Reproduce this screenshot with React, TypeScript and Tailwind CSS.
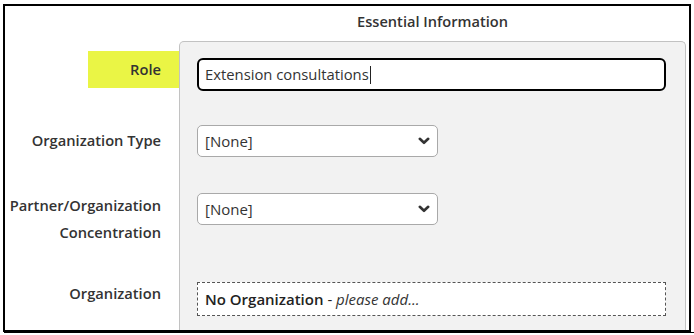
import React from "react";

function Chevron() {
  return (
    <svg width="12" height="8" viewBox="0 0 12 8" className="shrink-0">
      <path d="M1.8 1.8 L6 5.8 L10.2 1.8" fill="none" stroke="#333" strokeWidth="2.6" strokeLinecap="round" strokeLinejoin="round" />
    </svg>
  );
}

function Select() {
  return (
    <div className="flex h-[32px] w-[241px] items-center justify-between rounded-[5px] border border-[#a9a9a9] bg-white pl-[7px] pr-[7px] text-[15px] text-[#333]">
      <span>[None]</span>
      <Chevron />
    </div>
  );
}

export default function App() {
  return (
    <div className="relative h-[335px] w-[694px] bg-white" style={{ fontFamily: '"Open Sans", "Liberation Sans", sans-serif' }}>
      <div className="pt-[4px] pl-[3px]">
        <div className="flex h-[328px] w-[688px] flex-col overflow-hidden border-2 border-black">
          <div className="flex h-[35px] shrink-0">
            <div className="w-[174px] shrink-0" />
            <div className="flex w-[507px] items-center justify-center pb-[3px] text-[14.6px] font-semibold text-[#333]">
              Essential Information
            </div>
          </div>
          <div className="flex flex-1">
            <div className="flex w-[174px] shrink-0 flex-col text-[14.7px] font-semibold text-[#333]">
              <div className="ml-[83px] mt-[10px] flex h-[37px] items-center justify-end bg-[#eaf545] pr-[18px]">Role</div>
              <div className="mt-[39px] pr-[18px] text-right leading-[27px]">Organization Type</div>
              <div className="mt-[38px] pr-[18px] text-right leading-[27px]">
                Partner/Organization
                <br />
                Concentration
              </div>
              <div className="mt-[34px] pr-[18px] text-right leading-[27px]">Organization</div>
            </div>
            <div className="flex w-[507px] flex-col rounded-t-[5px] border border-b-0 border-[#c2c2c2] bg-[#f2f2f2] pl-[17px]">
              <div className="mt-[16px] flex h-[33px] w-[469px] items-center rounded-[6px] border-2 border-black bg-white pl-[6px] text-[14.8px] text-[#333]">
                <span>Extension consultations</span>
                <span className="ml-[1px] inline-block h-[18px] w-[1px] bg-[#222]" />
              </div>
              <div className="mt-[34px]">
                <Select />
              </div>
              <div className="mt-[36px]">
                <Select />
              </div>
              <div className="mt-[57px] flex h-[34px] w-[469px] items-center border border-dashed border-[#555] bg-white pl-[7px] text-[15px] text-[#222]">
                <span className="font-semibold">No Organization</span>
                <span className="whitespace-pre"> - </span>
                <span className="italic text-[#333]">please add...</span>
              </div>
            </div>
          </div>
        </div>
      </div>
      <div className="ml-[4px] h-[1px] w-[690px] bg-black" />
    </div>
  );
}
